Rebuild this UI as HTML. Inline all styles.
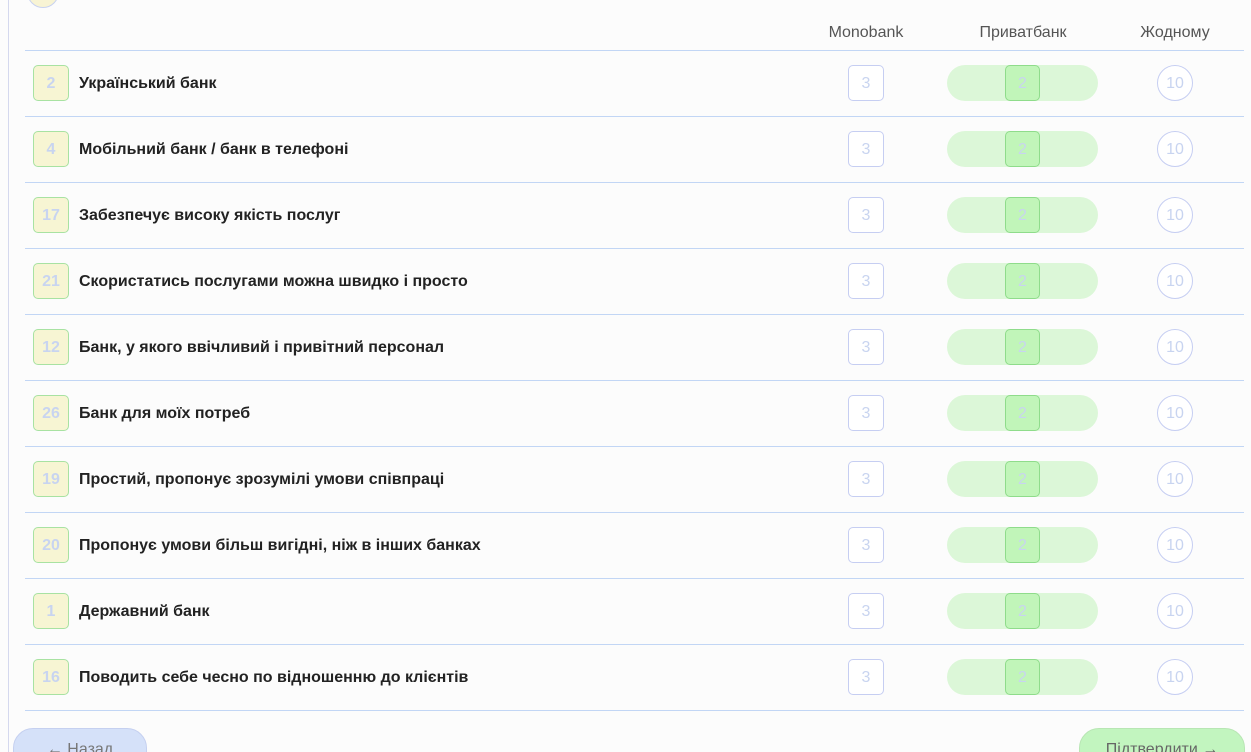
<!DOCTYPE html>
<html style="width:1251px;height:752px;overflow:hidden"><head><meta charset="utf-8"><style>
body{margin:0;width:1251px;height:752px;overflow:hidden;background:#fcfcfc;font-family:"Liberation Sans",sans-serif;position:relative}
.lb{position:absolute;left:8px;top:0;width:1px;height:752px;background:#d4d8ee}
.top{position:absolute;left:27px;top:-24px;width:30px;height:30px;border-radius:50%;background:#f8f4d4;border:1px solid #c8d2f0}
.h{position:absolute;top:24px;font-size:16px;color:#555;transform:translateX(-50%)}
.line{position:absolute;left:25px;width:1219px;height:1px;background:#c2d6f5}
.num{position:absolute;left:33px;width:34px;height:34px;border:1px solid #a8e2a2;border-radius:5px;background:#f7f5d3;color:#c8d4f0;font-weight:bold;font-size:16px;text-align:center;line-height:36px}
.t{position:absolute;left:79px;font-weight:bold;font-size:16px;color:#222;line-height:38px}
.m{position:absolute;left:848px;width:34px;height:34px;border:1px solid #c6cef2;border-radius:5px;background:#fff;color:#c8d4f0;font-size:16px;text-align:center;line-height:36px}
.p{position:absolute;left:947px;width:151px;height:36px;border-radius:18px;background:#dcf7d8}
.pi{position:absolute;left:1005px;width:33px;height:34px;border:1px solid #8fdc8b;border-radius:5px;background:#c1f5b9;color:#c8d4f0;font-size:16px;text-align:center;line-height:36px}
.c{position:absolute;left:1157px;width:34px;height:34px;border:1px solid #c6cef2;border-radius:50%;background:#fff;color:#c8d4f0;font-size:16px;text-align:center;line-height:36px}
.b{position:absolute;top:728px;height:50px;border-radius:20px;font-size:16px;color:#777;text-align:center;line-height:42px}
</style></head><body>
<div class="lb"></div><div class="top"></div>
<div class="h" style="left:866px">Monobank</div>
<div class="h" style="left:1023px">Приватбанк</div>
<div class="h" style="left:1175px">Жодному</div>
<div class="line" style="top:50px"></div>
<div id="rows"></div>
<div class="b" style="left:13px;width:132px;background:#d5e1f9;border:1px solid #c5d0f0">← Назад</div>
<div class="b" style="left:1079px;width:164px;background:#c2f5bf;border:1px solid #b8e6b4;color:#666">Підтвердити →</div>
<script>
var d=[["2","Український банк"],["4","Мобільний банк / банк в телефоні"],["17","Забезпечує високу якість послуг"],["21","Скористатись послугами можна швидко і просто"],["12","Банк, у якого ввічливий і привітний персонал"],["26","Банк для моїх потреб"],["19","Простий, пропонує зрозумілі умови співпраці"],["20","Пропонує умови більш вигідні, ніж в інших банках"],["1","Державний банк"],["16","Поводить себе чесно по відношенню до клієнтів"]];
var h="";d.forEach(function(r,i){var y=65+66*i;
h+='<div class="num" style="top:'+y+'px">'+r[0]+'</div><div class="t" style="top:'+y+'px">'+r[1]+'</div><div class="m" style="top:'+y+'px">3</div><div class="p" style="top:'+y+'px"></div><div class="pi" style="top:'+y+'px">2</div><div class="c" style="top:'+y+'px">10</div><div class="line" style="top:'+(y+51)+'px"></div>';});
document.getElementById("rows").innerHTML=h;
</script>
</body></html>
